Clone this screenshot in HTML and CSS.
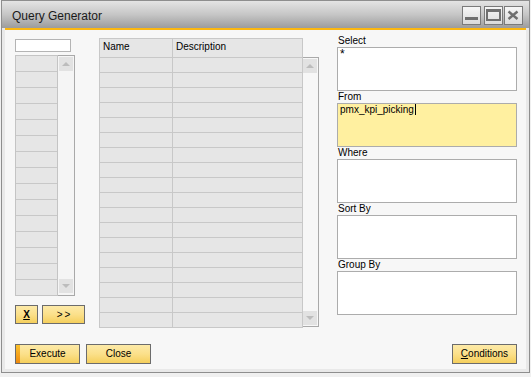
FILE: index.html
```html
<!DOCTYPE html>
<html>
<head>
<meta charset="utf-8">
<title>Query Generator</title>
<link rel="stylesheet" href="styles.css">
</head>
<body>
<div class="window">
  <div class="titlebar">
    <span class="title">Query Generator</span>
    <div class="wbtns">
      <span class="wbtn"><svg viewBox="0 0 17 17"><rect x="2" y="10" width="13" height="3" fill="#6f6f6f"/></svg></span>
      <span class="wbtn"><svg viewBox="0 0 17 17"><path d="M1 2h15v12H1z M3 5v7h11V5z" fill="#6f6f6f" fill-rule="evenodd"/></svg></span>
      <span class="wbtn close"><svg viewBox="0 0 17 17"><path d="M3.5 4.5l9 7.5M12.5 4.5l-9 7.5" stroke="#6f6f6f" stroke-width="2.4" fill="none"/></svg></span>
    </div>
  </div>
  <div class="frame">
    <div class="content">
      <div class="main">
        <div class="col-left">
          <div class="textbox"></div>
          <div class="list">
            <div class="cells">
              <div class="lrow"></div><div class="lrow"></div><div class="lrow"></div><div class="lrow"></div><div class="lrow"></div>
              <div class="lrow"></div><div class="lrow"></div><div class="lrow"></div><div class="lrow"></div><div class="lrow"></div>
              <div class="lrow"></div><div class="lrow"></div><div class="lrow"></div><div class="lrow"></div><div class="lrow"></div>
            </div>
            <div class="lscroll"><span class="sbtn"></span><span class="sbtn down"></span></div>
          </div>
          <div class="lbtns">
            <div class="btn btn-x"><u>X</u></div>
            <div class="btn btn-add">&gt;&gt;</div>
          </div>
        </div>
        <div class="col-grid">
          <div class="grid">
            <div class="grow ghead"><div class="gc c1">Name</div><div class="gc c2">Description</div></div>
            <div class="grow"><div class="gc c1"></div><div class="gc c2"></div></div>
            <div class="grow"><div class="gc c1"></div><div class="gc c2"></div></div>
            <div class="grow"><div class="gc c1"></div><div class="gc c2"></div></div>
            <div class="grow"><div class="gc c1"></div><div class="gc c2"></div></div>
            <div class="grow"><div class="gc c1"></div><div class="gc c2"></div></div>
            <div class="grow"><div class="gc c1"></div><div class="gc c2"></div></div>
            <div class="grow"><div class="gc c1"></div><div class="gc c2"></div></div>
            <div class="grow"><div class="gc c1"></div><div class="gc c2"></div></div>
            <div class="grow"><div class="gc c1"></div><div class="gc c2"></div></div>
            <div class="grow"><div class="gc c1"></div><div class="gc c2"></div></div>
            <div class="grow"><div class="gc c1"></div><div class="gc c2"></div></div>
            <div class="grow"><div class="gc c1"></div><div class="gc c2"></div></div>
            <div class="grow"><div class="gc c1"></div><div class="gc c2"></div></div>
            <div class="grow"><div class="gc c1"></div><div class="gc c2"></div></div>
            <div class="grow"><div class="gc c1"></div><div class="gc c2"></div></div>
            <div class="grow"><div class="gc c1"></div><div class="gc c2"></div></div>
            <div class="grow"><div class="gc c1"></div><div class="gc c2"></div></div>
            <div class="grow"><div class="gc c1"></div><div class="gc c2"></div></div>
          </div>
          <div class="gscroll"><span class="sbtn"></span><span class="sbtn down"></span></div>
        </div>
        <div class="col-right">
          <div class="flabel">Select</div>
          <div class="fbox"><span class="star">*</span></div>
          <div class="flabel">From</div>
          <div class="fbox hl">pmx_kpi_picking<span class="caret"></span></div>
          <div class="flabel">Where</div>
          <div class="fbox"></div>
          <div class="flabel">Sort By</div>
          <div class="fbox"></div>
          <div class="flabel">Group By</div>
          <div class="fbox"></div>
        </div>
      </div>
      <div class="footer">
        <div class="btn fbtn exec">Execute</div>
        <div class="btn fbtn close-btn">Close</div>
        <div class="btn fbtn cond"><u>C</u>onditions</div>
      </div>
    </div>
  </div>
</div>
</body>
</html>
```

FILE: styles.css
```css
html, body {
  margin: 0;
  padding: 0;
}
body {
  background: #f0f0f0;
  font-family: "Liberation Sans", Arial, sans-serif;
  font-size: 10px;
  color: #000;
}
.window {
  margin-left: 1px;
  width: 529px;
  height: 373px;
  box-sizing: border-box;
  border: 1px solid #8e8e8e;
  background: #e9e9e9;
  display: flex;
  flex-direction: column;
}
.titlebar {
  height: 27px;
  flex: none;
  display: flex;
  justify-content: space-between;
  align-items: flex-start;
  background: linear-gradient(to bottom, #e4e4e4 0%, #c6c6c6 50%, #9c9c9c 100%);
}
.title {
  font-size: 12px;
  line-height: 19px;
  padding: 6px 0 0 10px;
  color: #1a1a1a;
}
.wbtns {
  display: flex;
  margin: 5px 6px 0 0;
}
.wbtn {
  width: 19px;
  height: 19px;
  box-sizing: border-box;
  border: 1px solid #7a7a7a;
  background: linear-gradient(to bottom, #f6f6f6, #dadada);
}
.wbtn + .wbtn {
  margin-left: 3px;
}
.wbtn.close {
  margin-left: 1px;
}
.wbtn svg {
  display: block;
  width: 17px;
  height: 17px;
}
.frame {
  flex: 1;
  display: flex;
  padding: 0 3px 3px 3px;
}
.content {
  flex: 1;
  border-top: 2px solid #fbb710;
  background: #f7f7f7;
  display: flex;
  flex-direction: column;
}
.main {
  display: flex;
  align-items: flex-start;
  padding-left: 10px;
}
.col-left {
  flex: none;
  margin-top: 9px;
  width: 60px;
  display: flex;
  flex-direction: column;
}
.textbox {
  width: 56px;
  height: 13px;
  box-sizing: border-box;
  border: 1px solid #b4b4b4;
  background: #fff;
}
.list {
  margin-top: 3px;
  height: 241px;
  display: flex;
}
.cells {
  flex: none;
  width: 43px;
  box-sizing: border-box;
  border: 1px solid #c4c4c4;
  background: #e6e6e6;
}
.lrow {
  height: 15px;
  border-bottom: 1px solid #c8c8c8;
}
.lrow:last-child {
  border-bottom: none;
}
.lscroll {
  flex: none;
  width: 17px;
  box-sizing: border-box;
  border: 1px solid #a9a9a9;
  border-left: none;
  padding: 1px 1px 2px 1px;
  background: #f5f5f5;
  display: flex;
  flex-direction: column;
  justify-content: space-between;
}
.sbtn {
  width: 14px;
  height: 14px;
  background: #e2e2e2;
  display: flex;
  align-items: center;
  justify-content: center;
}
.sbtn::before {
  content: "";
  border-left: 4px solid transparent;
  border-right: 4px solid transparent;
  border-bottom: 4px solid #bcbcbc;
}
.sbtn.down::before {
  border-bottom: none;
  border-top: 4px solid #bcbcbc;
}
.lbtns {
  margin-top: 9px;
  display: flex;
  gap: 4px;
}
.btn {
  flex: none;
  box-sizing: border-box;
  height: 19px;
  border: 1px solid #6c6c6c;
  background: linear-gradient(to bottom, #fdeaa8 0%, #fbe08a 50%, #f5cf5c 100%);
  display: flex;
  align-items: center;
  justify-content: center;
  font-size: 10px;
  line-height: 12px;
  color: #000;
}
.btn-x {
  width: 23px;
  font-weight: bold;
}
.btn-add {
  width: 43px;
  letter-spacing: 2px;
  padding-left: 2px;
}
.col-grid {
  flex: none;
  margin-left: 24px;
  margin-top: 8px;
  display: flex;
}
.grid {
  flex: none;
  width: 204px;
  box-sizing: border-box;
  border-left: 1px solid #c8c8c8;
  border-top: 1px solid #c8c8c8;
  background: #e6e6e6;
}
.grow {
  display: flex;
  height: 15px;
}
.gc {
  flex: none;
  box-sizing: border-box;
  height: 100%;
  border-right: 1px solid #c8c8c8;
  border-bottom: 1px solid #c8c8c8;
}
.c1 {
  width: 73px;
}
.c2 {
  width: 130px;
}
.ghead {
  height: 19px;
}
.ghead .gc {
  padding: 2px 3px;
  line-height: 12px;
}
.gscroll {
  flex: none;
  margin-top: 19px;
  width: 16px;
  height: 270px;
  box-sizing: border-box;
  border: 1px solid #a9a9a9;
  border-left: none;
  padding: 1px 1px 1px 0;
  display: flex;
  flex-direction: column;
  justify-content: space-between;
}
.col-right {
  flex: none;
  margin-left: 18px;
  margin-top: 5px;
  width: 180px;
}
.flabel {
  height: 11px;
  line-height: 12px;
  padding-left: 1px;
  margin-bottom: 1px;
}
.fbox {
  height: 44px;
  box-sizing: border-box;
  border: 1px solid #acacac;
  background: #fff;
  padding: 0 2px;
  line-height: 12px;
}
.fbox.hl {
  background: #fff0a0;
}
.star {
  font-size: 12px;
}
.caret {
  display: inline-block;
  width: 1px;
  height: 11px;
  background: #000;
  vertical-align: -2px;
  margin-left: 1px;
}
.footer {
  display: flex;
  margin-top: 16px;
  padding: 0 9px 0 10px;
}
.fbtn {
  width: 65px;
  height: 20px;
}
.exec {
  background:
    linear-gradient(to bottom, #fbc22e, #ef8a0e) left top / 4px 100% no-repeat,
    linear-gradient(to bottom, #fdeaa8 0%, #fbe08a 50%, #f5cf5c 100%);
}
.close-btn {
  margin-left: 6px;
}
.cond {
  margin-left: auto;
}
```
